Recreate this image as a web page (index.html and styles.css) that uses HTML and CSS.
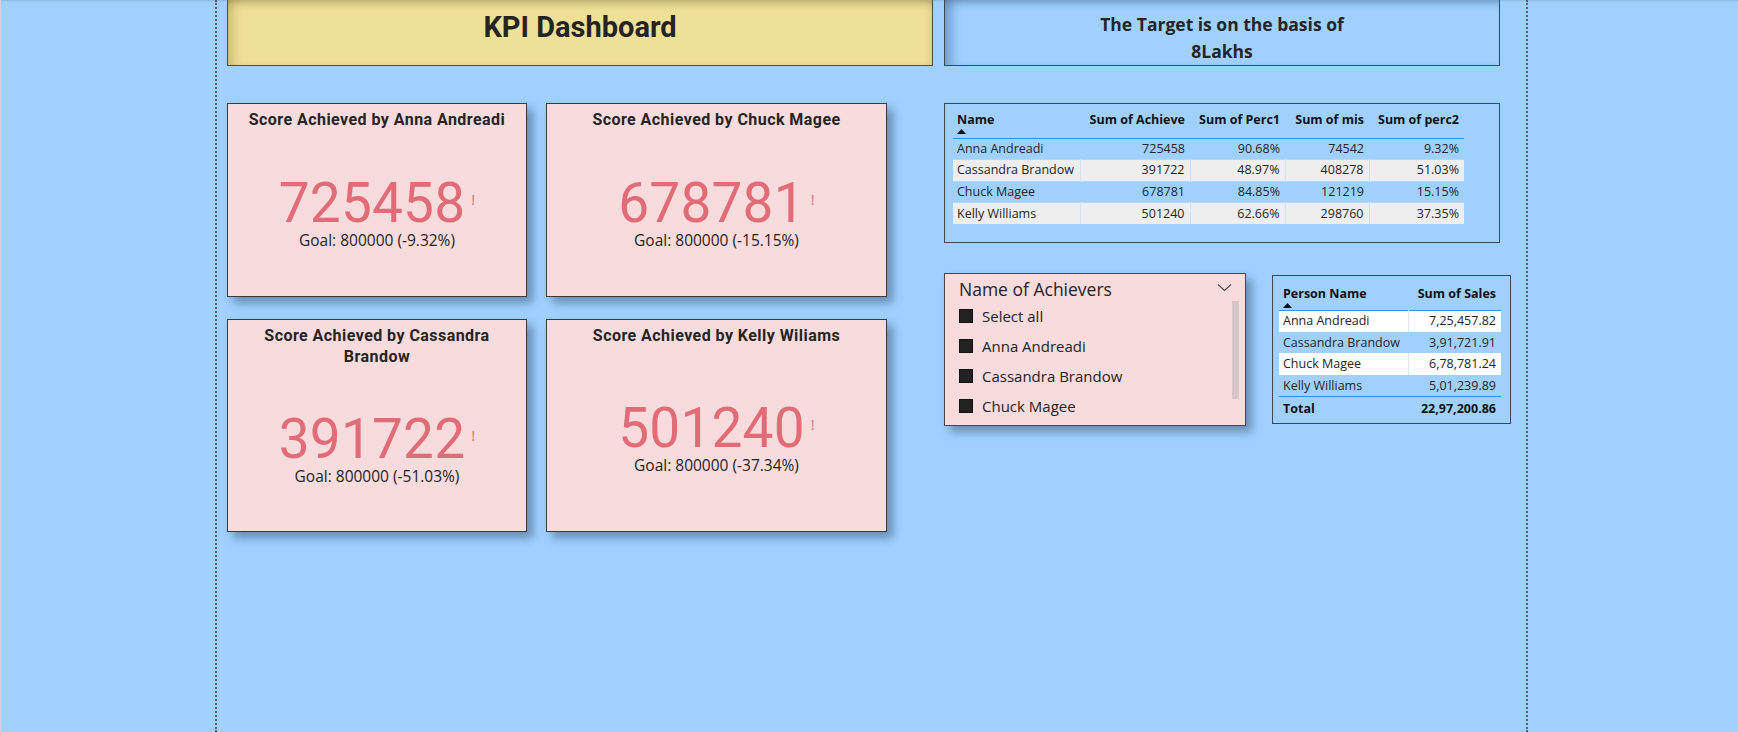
FILE: index.html
```html
<!DOCTYPE html>
<html lang="en">
<head>
<meta charset="utf-8">
<title>KPI Dashboard</title>
<link rel="stylesheet" href="styles.css">
</head>
<body>
<div class="app">
  <div class="canvas">
    <div class="top">
      <div class="banner kpi"><h1>KPI Dashboard</h1></div>
      <div class="banner target"><p>The Target is on the basis of<br>8Lakhs</p></div>
    </div>
    <div class="main">
      <div class="cards">
        <div class="card">
          <div class="card-title">Score Achieved by Anna Andreadi</div>
          <div class="card-body">
            <div class="value"><span class="num">725458</span><span class="bang">!</span></div>
            <div class="goal">Goal: 800000 (-9.32%)</div>
          </div>
        </div>
        <div class="card">
          <div class="card-title">Score Achieved by Chuck Magee</div>
          <div class="card-body">
            <div class="value"><span class="num">678781</span><span class="bang">!</span></div>
            <div class="goal">Goal: 800000 (-15.15%)</div>
          </div>
        </div>
        <div class="card">
          <div class="card-title">Score Achieved by Cassandra Brandow</div>
          <div class="card-body">
            <div class="value"><span class="num">391722</span><span class="bang">!</span></div>
            <div class="goal">Goal: 800000 (-51.03%)</div>
          </div>
        </div>
        <div class="card">
          <div class="card-title">Score Achieved by Kelly Wiliams</div>
          <div class="card-body">
            <div class="value"><span class="num">501240</span><span class="bang">!</span></div>
            <div class="goal">Goal: 800000 (-37.34%)</div>
          </div>
        </div>
      </div>

      <div class="side">
        <div class="matrix">
          <table class="grid grid-main">
            <colgroup><col class="c1"><col class="c2"><col class="c3"><col class="c4"><col class="c5"></colgroup>
            <thead>
              <tr>
                <th class="left">Name<svg class="sort" width="9" height="5" viewBox="0 0 9 5"><polygon points="0,5 4.5,0 9,5" fill="#111"/></svg></th>
                <th>Sum of Achieve</th>
                <th>Sum of Perc1</th>
                <th>Sum of mis</th>
                <th>Sum of perc2</th>
              </tr>
            </thead>
            <tbody>
              <tr><td class="left">Anna Andreadi</td><td>725458</td><td>90.68%</td><td>74542</td><td>9.32%</td></tr>
              <tr class="stripe"><td class="left">Cassandra Brandow</td><td>391722</td><td>48.97%</td><td>408278</td><td>51.03%</td></tr>
              <tr><td class="left">Chuck Magee</td><td>678781</td><td>84.85%</td><td>121219</td><td>15.15%</td></tr>
              <tr class="stripe"><td class="left">Kelly Williams</td><td>501240</td><td>62.66%</td><td>298760</td><td>37.35%</td></tr>
            </tbody>
          </table>
        </div>

        <div class="lower">
          <div class="slicer">
            <div class="slicer-head">
              <span class="slicer-title">Name of Achievers</span>
              <svg class="chev" width="15" height="9" viewBox="0 0 15 9"><polyline points="1,1.5 7.5,7.5 14,1.5" fill="none" stroke="#4a4a4a" stroke-width="1.1"/></svg>
            </div>
            <div class="slicer-body">
              <ul class="items">
                <li><span class="box"></span>Select all</li>
                <li><span class="box"></span>Anna Andreadi</li>
                <li><span class="box"></span>Cassandra Brandow</li>
                <li><span class="box"></span>Chuck Magee</li>
              </ul>
              <div class="scrollbar"></div>
            </div>
          </div>

          <div class="sales">
            <table class="grid grid-sales">
              <colgroup><col class="s1"><col class="s2"></colgroup>
              <thead>
                <tr>
                  <th class="left">Person Name<svg class="sort" width="9" height="5" viewBox="0 0 9 5"><polygon points="0,5 4.5,0 9,5" fill="#111"/></svg></th>
                  <th>Sum of Sales</th>
                </tr>
              </thead>
              <tbody>
                <tr class="white"><td class="left">Anna Andreadi</td><td>7,25,457.82</td></tr>
                <tr><td class="left">Cassandra Brandow</td><td>3,91,721.91</td></tr>
                <tr class="white"><td class="left">Chuck Magee</td><td>6,78,781.24</td></tr>
                <tr><td class="left">Kelly Williams</td><td>5,01,239.89</td></tr>
              </tbody>
              <tfoot>
                <tr><td class="left">Total</td><td>22,97,200.86</td></tr>
              </tfoot>
            </table>
          </div>
        </div>
      </div>
    </div>
  </div>
</div>
</body>
</html>
```
FILE: styles.css
```css
* { box-sizing: border-box; margin: 0; padding: 0; }

html, body { height: 100%; }

body {
  background: #a0d1fe;
  font-family: "Open Sans", "Liberation Sans", sans-serif;
  color: #252423;
  overflow: hidden;
}

.app {
  min-height: 732px;
  border-left: 1px solid #d3d6da;
  box-shadow: inset 0 2px 2px -1px rgba(0, 0, 0, 0.14);
}

.canvas {
  margin-left: 214px;
  width: 1313px;
  min-height: 732px;
  border-left: 2px dotted #5c5c5c;
  border-right: 2px dotted #5c5c5c;
  padding-left: 10px;
}

/* ---------- top banners ---------- */
.top {
  display: flex;
  gap: 11px;
}

.banner {
  height: 66px;
  border: 1px solid #4f4d43;
  border-top: none;
  text-align: center;
}

.kpi {
  width: 706px;
  background: #efe097;
  padding-top: 10px;
  box-shadow: inset 12px 0 12px -8px rgba(90, 70, 0, 0.28),
              inset 0 10px 10px -8px rgba(60, 50, 0, 0.35),
              inset -6px 0 8px -6px rgba(90, 70, 0, 0.2);
}

.kpi h1 {
  font: 700 29px/34px Roboto, sans-serif;
  color: #252423;
}

.target {
  width: 556px;
  background: #a0d1fe;
  border-color: #3e4652;
  padding-top: 11px;
  box-shadow: inset 14px 0 12px -8px rgba(20, 50, 90, 0.35),
              inset 0 10px 10px -8px rgba(20, 50, 90, 0.4);
}

.target p {
  font: 700 17.5px/26.5px "Open Sans", sans-serif;
  color: #252423;
}

/* ---------- main ---------- */
.main {
  display: flex;
  align-items: flex-start;
  gap: 57px;
  margin-top: 37px;
}

.cards {
  display: grid;
  grid-template-columns: 300px 341px;
  grid-template-rows: 194px 213px;
  gap: 22px 19px;
}

.card {
  background: #f7dbdd;
  border: 1px solid #3a3a3a;
  box-shadow: 6px 6px 9px rgba(25, 45, 80, 0.42);
  display: flex;
  flex-direction: column;
}

.card-title {
  font: 700 16px/21px Roboto, sans-serif;
  letter-spacing: 0.45px;
  text-align: center;
  padding: 5px 10px 0;
  color: #252423;
}

.card-body {
  flex: 1;
  display: flex;
  flex-direction: column;
  align-items: center;
  justify-content: center;
}

.value {
  display: flex;
  align-items: flex-start;
}

.num {
  font: 400 55px/52px Roboto, sans-serif;
  color: #e16b77;
  letter-spacing: 0.2px;
}

.bang {
  font: 400 15px/15px "Open Sans", sans-serif;
  color: #e16b77;
  margin: 15px 0 0 6px;
}

.goal {
  font: 400 15.5px/20px "Open Sans", sans-serif;
  color: #1f1f1f;
  margin-top: 1px;
}

/* ---------- side column ---------- */
.side {
  width: 567px;
}

.matrix {
  width: 556px;
  height: 140px;
  border: 1px solid #3e4652;
  padding: 8px 0 0 8px;
}

.grid {
  border-collapse: collapse;
  table-layout: fixed;
  font-size: 12.5px;
  color: #252423;
}

.grid-main { width: 511px; }
.grid-main .c1 { width: 127px; }
.grid-main .c2 { width: 110px; }
.grid-main .c3 { width: 95px; }
.grid-main .c4 { width: 84px; }
.grid-main .c5 { width: 95px; }

.grid th {
  font-weight: 700;
  text-align: right;
  vertical-align: top;
  line-height: 16px;
  padding: 0 5px 0 4px;
  white-space: nowrap;
  color: #111;
}

.grid th.left,
.grid td.left { text-align: left; }

.sort {
  display: block;
  margin-top: 1px;
}

.grid-main thead tr {
  height: 26px;
  border-bottom: 1px solid #2d8fee;
}

.grid td {
  text-align: right;
  line-height: 20px;
  padding: 0 5px 0 4px;
  white-space: nowrap;
}

.grid-main tbody tr {
  height: 21.6px;
  border-top: 1px solid #b4d8fc;
}

.grid-main tbody tr:first-child { border-top: none; }

.grid-main tr.stripe { background: #eeeeee; }
.grid-main tr.stripe td:not(:last-child) { border-right: 1px solid #cde4fa; }

/* ---------- lower row ---------- */
.lower {
  display: flex;
  align-items: flex-start;
  gap: 26px;
  margin-top: 30px;
}

.slicer {
  width: 302px;
  height: 153px;
  background: #f7dbdd;
  border: 1px solid #474747;
  box-shadow: 6px 6px 9px rgba(25, 45, 80, 0.42);
  padding: 3px 6px 0 14px;
  overflow: hidden;
}

.slicer-head {
  display: flex;
  align-items: center;
  justify-content: space-between;
  height: 24px;
}

.slicer-title {
  font: 400 17.5px/24px "Open Sans", sans-serif;
  color: #252423;
}

.chev {
  margin-right: 7px;
  margin-top: -3px;
}

.slicer-body {
  display: flex;
  align-items: flex-start;
}

.items {
  list-style: none;
  flex: 1;
}

.items li {
  display: flex;
  align-items: center;
  gap: 9px;
  height: 30px;
  font: 400 15px/20px "Open Sans", sans-serif;
  color: #252423;
}

.box {
  width: 14px;
  height: 14px;
  background: #232323;
  border: 1px solid #111;
}

.scrollbar {
  width: 7px;
  height: 98px;
  background: #d5c6c8;
}

.sales {
  width: 239px;
  height: 149px;
  margin-top: 2px;
  border: 1px solid #3e4652;
  padding: 10px 9px 0 6px;
}

.grid-sales { width: 222px; }
.grid-sales .s1 { width: 129px; }
.grid-sales .s2 { width: 93px; }

.grid-sales thead tr {
  height: 24px;
  border-bottom: 1px solid #2d8fee;
}

.grid-sales tbody tr { height: 21.7px; }

.grid-sales tr.white { background: #ffffff; }
.grid-sales tr.white td:first-child { border-right: 1px solid #dde9f5; }

.grid-sales tfoot tr {
  height: 23px;
  border-top: 1px solid #2d8fee;
}

.grid-sales tfoot td {
  font-weight: 700;
  color: #111;
}
```
